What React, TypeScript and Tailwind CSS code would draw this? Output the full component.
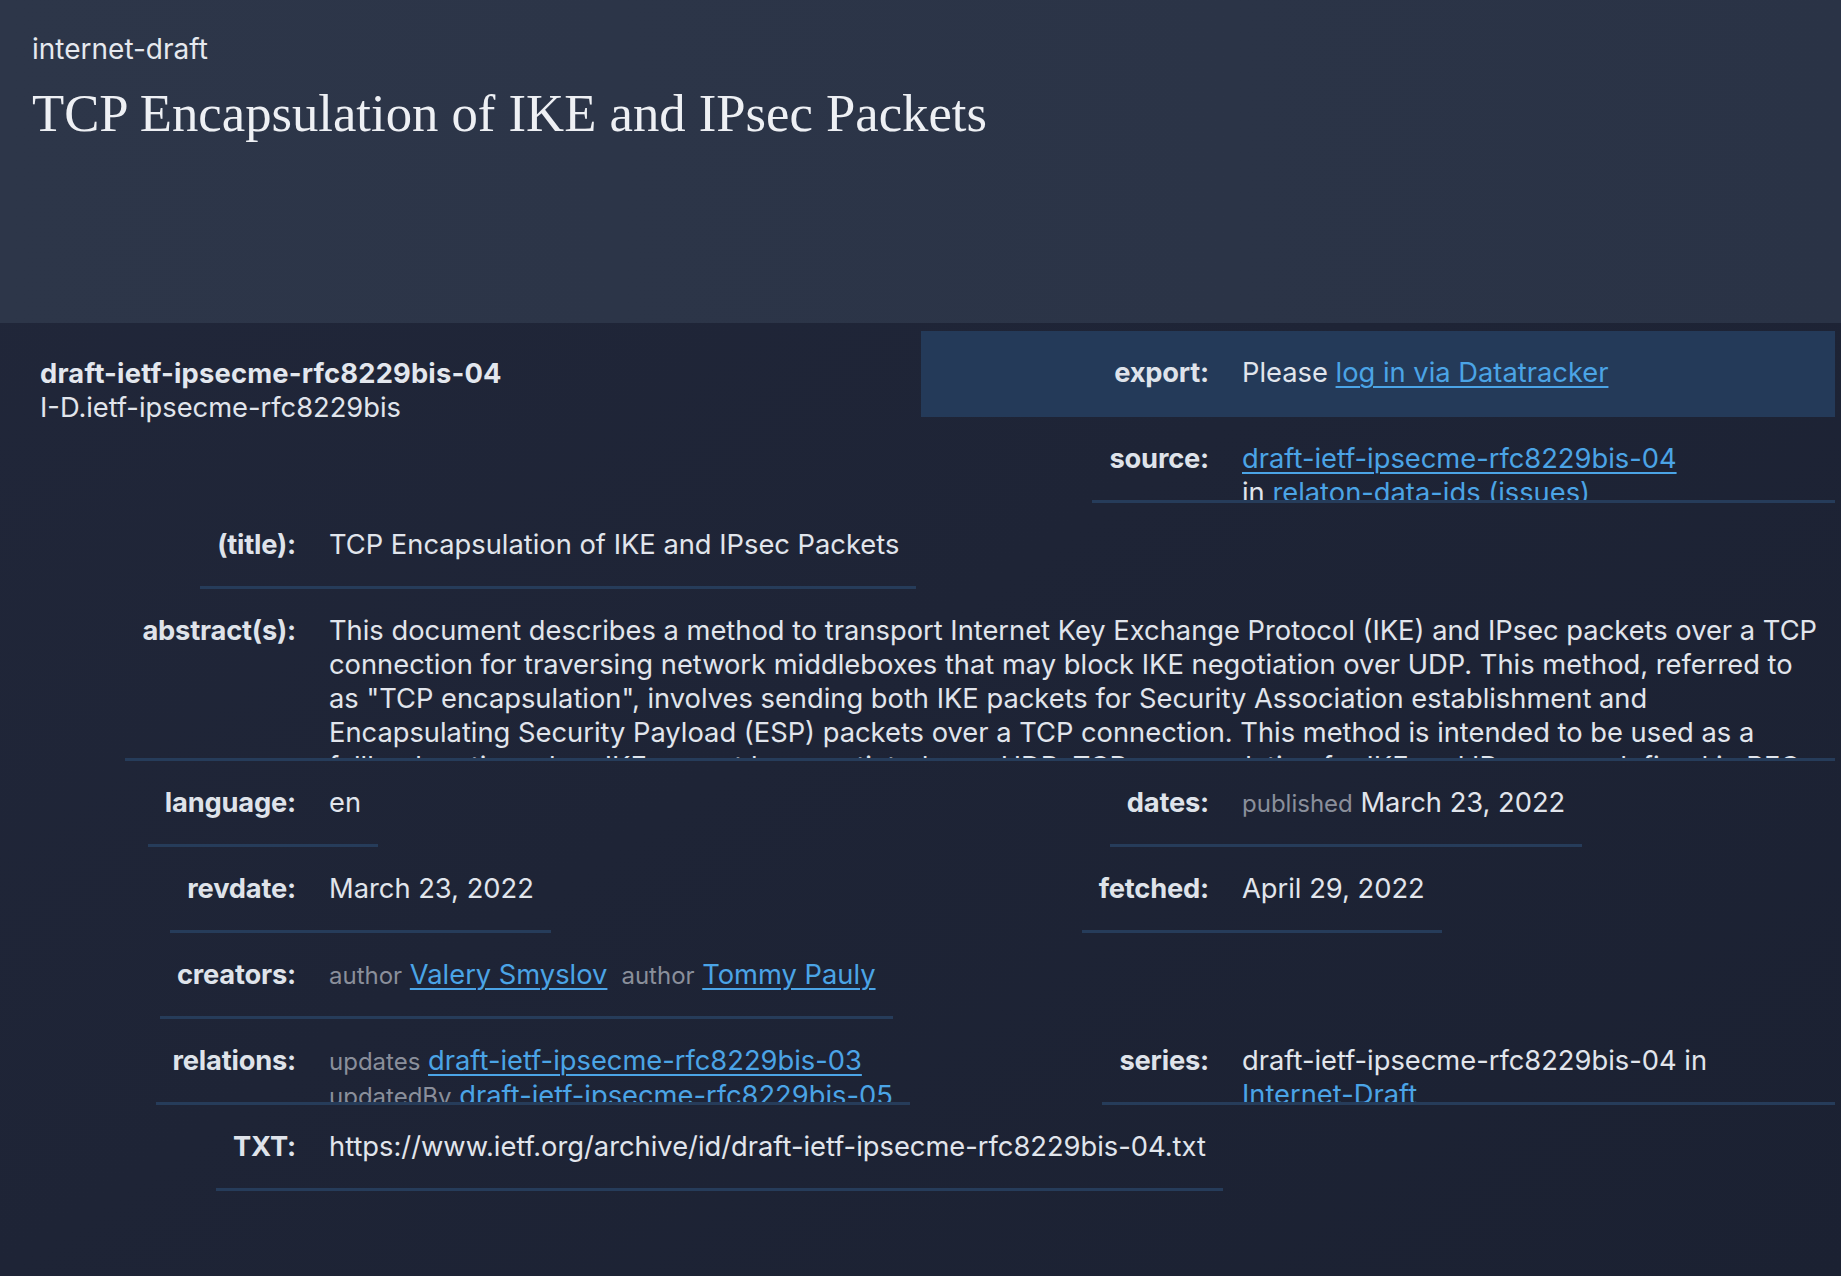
import React from "react";

const FONT = { fontFamily: "Inter, 'Noto Sans', sans-serif" };
const LINK = "text-[#4ba4e6] underline decoration-2 underline-offset-[4px]";
const BORDER = "border-b-[3px] border-[#263c5a]";

type RowProps = {
  label: string;
  left: "l" | "r";
  tall?: boolean;
  noBorder?: boolean;
  grow?: boolean;
  className?: string;
  children: React.ReactNode;
};

function Row({ label, left, tall, noBorder, grow, className = "", children }: RowProps) {
  const b = noBorder ? "" : BORDER;
  return (
    <div className={`flex ${tall ? "h-[172px]" : "h-[86px]"} ${className}`}>
      <div className={`flex shrink-0 justify-end ${left === "l" ? "w-[329px]" : "w-[321px]"}`}>
        <div className={`${b} whitespace-nowrap pl-[17px] pr-[33px] pt-[25px] font-bold tracking-[-0.2px] text-[#dfe3ea]`}>
          {label}
        </div>
      </div>
      <div className={`${b} ${grow ? "flex-1" : ""} min-w-0 overflow-hidden pr-[17px] pt-[25px] text-[#e1e5ec]`}>
        {children}
      </div>
    </div>
  );
}

const Muted = ({ children }: { children: React.ReactNode }) => (
  <span className="text-[24px] text-[#8a8f9b]">{children}</span>
);

export default function App() {
  return (
    <div
      className="min-h-screen w-full bg-gradient-to-br from-[#21273a] to-[#1b2132] text-[27.3px] leading-[34px]"
      style={FONT}
    >
      <header className="h-[323px] bg-gradient-to-r from-[#2d3649] to-[#2a3346] px-[32px] pt-[31px]">
        <div className="text-[28px] leading-[36px] text-[#e6e9ef]">internet-draft</div>
        <h1
          className="mt-[14px] text-[52.7px] leading-[64px] text-[#eef0f4]"
          style={{ fontFamily: "'Liberation Serif', serif" }}
        >
          TCP Encapsulation of IKE and IPsec Packets
        </h1>
      </header>

      <main className="grid grid-cols-[921px_914px] pt-[8px]">
        <div className="col-start-1 row-start-1 row-span-2 pl-[40px] pt-[26px] text-[#e1e5ec]">
          <div className="font-bold tracking-[0.2px] text-[#e3e7ee]">draft-ietf-ipsecme-rfc8229bis-04</div>
          <div>I-D.ietf-ipsecme-rfc8229bis</div>
        </div>

        <Row label="export:" left="r" noBorder className="col-start-2 row-start-1 bg-[#243a59]">
          Please <span className={LINK}>log in via Datatracker</span>
        </Row>

        <Row label="source:" left="r" grow className="col-start-2 row-start-2">
          <div>
            <span className={LINK}>draft-ietf-ipsecme-rfc8229bis-04</span>
          </div>
          <div className="whitespace-nowrap">
            in <span className={LINK}>relaton-data-ids</span> <span className={LINK}>(issues)</span>
          </div>
        </Row>

        <Row label="(title):" left="l" className="col-start-1 row-start-3">
          TCP Encapsulation of IKE and IPsec Packets
        </Row>

        <Row label="abstract(s):" left="l" tall className="col-span-2 col-start-1 row-start-4">
          This document describes a method to transport Internet Key Exchange Protocol (IKE) and IPsec packets over a TCP
          connection for traversing network middleboxes that may block IKE negotiation over UDP. This method, referred to
          as "TCP encapsulation", involves sending both IKE packets for Security Association establishment and
          Encapsulating Security Payload (ESP) packets over a TCP connection. This method is intended to be used as a
          fallback option when IKE cannot be negotiated over UDP. TCP encapsulation for IKE and IPsec was defined in RFC
          8229. This document clarifies the specification for TCP encapsulation by including additional clarifications
          obtained during implementation and deployment of this method. This documents obsoletes RFC 8229.
        </Row>

        <Row label="language:" left="l" className="col-start-1 row-start-5">
          en
        </Row>
        <Row label="dates:" left="r" className="col-start-2 row-start-5">
          <Muted>published</Muted> March 23, 2022
        </Row>

        <Row label="revdate:" left="l" className="col-start-1 row-start-6">
          March 23, 2022
        </Row>
        <Row label="fetched:" left="r" className="col-start-2 row-start-6">
          April 29, 2022
        </Row>

        <Row label="creators:" left="l" className="col-start-1 row-start-7">
          <span className="whitespace-nowrap">
            <Muted>author</Muted> <span className={LINK}>Valery Smyslov</span>
            <span className="ml-[14px]" />
            <Muted>author</Muted> <span className={LINK}>Tommy Pauly</span>
          </span>
        </Row>

        <Row label="relations:" left="l" className="col-start-1 row-start-8">
          <div className="whitespace-nowrap">
            <Muted>updates</Muted> <span className={LINK}>draft-ietf-ipsecme-rfc8229bis-03</span>
          </div>
          <div className="whitespace-nowrap">
            <Muted>updatedBy</Muted> <span className={LINK}>draft-ietf-ipsecme-rfc8229bis-05</span>
          </div>
        </Row>
        <Row label="series:" left="r" grow className="col-start-2 row-start-8">
          draft-ietf-ipsecme-rfc8229bis-04 in <span className={LINK}>Internet-Draft</span>
        </Row>

        <Row label="TXT:" left="l" className="col-span-2 col-start-1 row-start-9">
          <span className="whitespace-nowrap">https://www.ietf.org/archive/id/draft-ietf-ipsecme-rfc8229bis-04.txt</span>
        </Row>
      </main>
    </div>
  );
}
